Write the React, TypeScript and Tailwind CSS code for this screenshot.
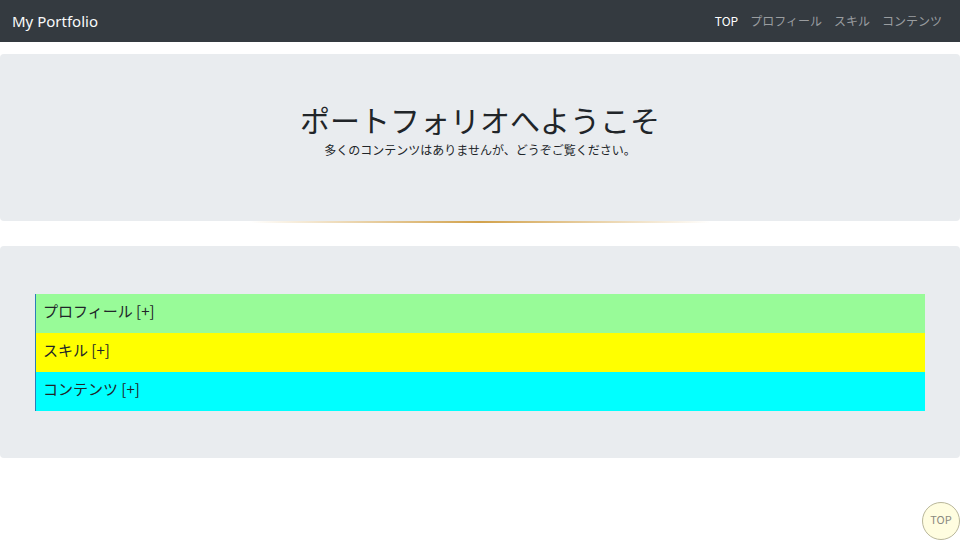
import React from "react";

const font = { fontFamily: '"Noto Sans CJK JP", "Noto Sans", sans-serif' };

export default function App() {
  return (
    <div className="relative w-[960px] h-[540px] bg-white overflow-hidden" style={font}>
      <nav className="h-[42px] bg-[#343a40] flex items-center justify-between pl-[12px] pr-[18px]">
        <span className="text-[#f8f9fa] text-[15px]" style={{ fontFamily: '"Noto Sans", sans-serif' }}>My Portfolio</span>
        <div className="flex items-center gap-[12px] text-[12px]">
          <span className="text-white">TOP</span>
          <span className="text-[#9a9da0]">プロフィール</span>
          <span className="text-[#9a9da0]">スキル</span>
          <span className="text-[#9a9da0]">コンテンツ</span>
        </div>
      </nav>
      <section className="mt-[12px] h-[167px] bg-[#e9ecef] rounded-[4px] flex flex-col items-center pt-[46px]">
        <h1 className="text-[30px] leading-[38px] text-[#212529]">ポートフォリオへようこそ</h1>
        <p className="text-[12px] leading-[16px] text-[#212529] mt-[4px]">多くのコンテンツはありませんが、どうぞご覧ください。</p>
      </section>
      <div className="h-[2px] mx-[250px] bg-[linear-gradient(90deg,rgba(255,240,180,0),#d2a24c_50%,rgba(255,240,180,0))]" />
      <section className="mt-[23px] h-[212px] bg-[#e9ecef] rounded-[4px] px-[35px] pt-[48px]">
        <div className="border-l border-[#2c7fb8] text-[15px] text-[#212529]">
          <div className="h-[39px] bg-[#98fb98] flex items-center pl-[7px] pb-[4px]">プロフィール [+]</div>
          <div className="h-[39px] bg-[#ffff00] flex items-center pl-[7px] pb-[4px]">スキル [+]</div>
          <div className="h-[39px] bg-[#00ffff] flex items-center pl-[7px] pb-[4px]">コンテンツ [+]</div>
        </div>
      </section>
      <div className="absolute left-[922px] top-[502px] w-[38px] h-[38px] rounded-full bg-[#fffde0] border border-[#b9b79a] flex items-center justify-center pb-[4px] text-[11px] text-[#8a8a80]">
        TOP
      </div>
    </div>
  );
}
